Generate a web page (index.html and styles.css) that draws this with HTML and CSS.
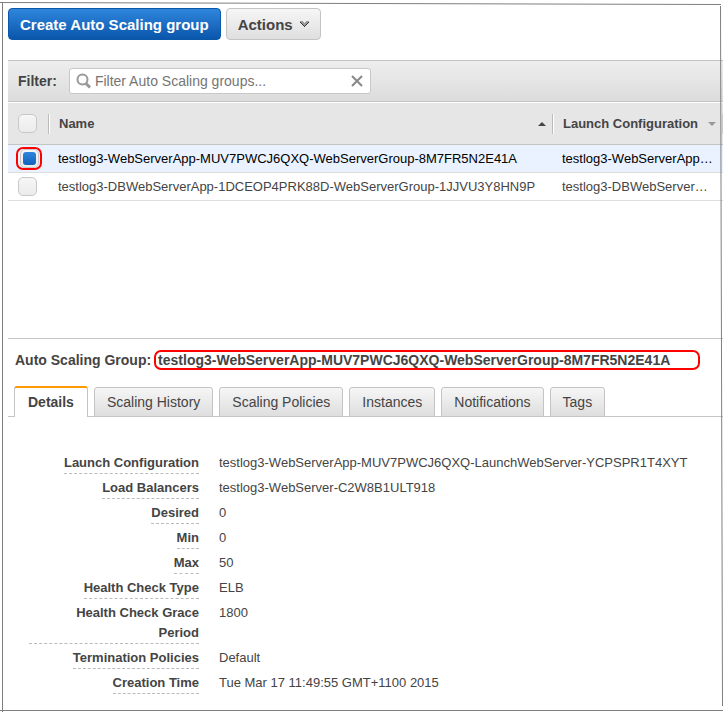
FILE: index.html
```html
<!DOCTYPE html>
<html lang="en">
<head>
    <meta charset="UTF-8">
    <meta name="viewport" content="width=device-width, initial-scale=1.0">
    <title>Auto Scaling Groups</title>
    <link rel="stylesheet" href="styles.css">
</head>
<body>
    <div class="page">
        <div class="toolbar">
            <button type="button" class="btn btn-primary">Create Auto Scaling group</button>
            <button type="button" class="btn">Actions
                <svg width="9" height="7" viewBox="0 0 9 7" shape-rendering="crispEdges"><path d="M0 0h3v1h1v1h1V1h1V0h3v2H8v1H7v1H6v1H5v1H4V5H3V4H2V3H1V2H0z" fill="#999"/><path d="M0 1h1v1h1v1h1v1h1v1h1V4h1V3h1V2h1V1h1v1H8v1H7v1H6v1H5v1H4V5H3V4H2V3H1V2H0z" fill="#333"/></svg>
            </button>
        </div>

        <div class="filter-bar">
            <label for="filter">Filter:</label>
            <div class="search">
                <svg width="16" height="16" viewBox="0 0 16 16" fill="none" stroke="#999"><circle cx="6.500" cy="6.500" r="5" stroke-width="2"/><path d="M10 10.500l4 4" stroke-width="3"/></svg>
                <input type="text" id="filter" placeholder="Filter Auto Scaling groups...">
                <button type="button" class="clear" aria-label="Clear filter">
                    <svg width="12" height="12" viewBox="0 0 12 12" stroke="#888" stroke-width="2"><path d="M1 1l10 10M11 1L1 11"/></svg>
                </button>
            </div>
        </div>

        <div class="list">
            <table class="groups">
                <colgroup>
                    <col class="col-check">
                    <col class="col-name">
                    <col class="col-config">
                </colgroup>
                <thead>
                    <tr>
                        <th><input type="checkbox" class="check" aria-label="Select all"></th>
                        <th><div class="head">Name <span class="sort sort-up"></span></div></th>
                        <th><div class="head head-last">Launch Configuration <span class="sort sort-down"></span></div></th>
                    </tr>
                </thead>
                <tbody>
                    <tr class="selected">
                        <td><span class="mark mark-check"><input type="checkbox" class="check" aria-label="Select testlog3-WebServerApp" checked></span></td>
                        <td>testlog3-WebServerApp-MUV7PWCJ6QXQ-WebServerGroup-8M7FR5N2E41A</td>
                        <td>testlog3-WebServerApp…</td>
                    </tr>
                    <tr>
                        <td><input type="checkbox" class="check" aria-label="Select testlog3-DBWebServerApp"></td>
                        <td>testlog3-DBWebServerApp-1DCEOP4PRK88D-WebServerGroup-1JJVU3Y8HN9P</td>
                        <td>testlog3-DBWebServer…</td>
                    </tr>
                </tbody>
            </table>
        </div>

        <div class="detail">
            <h2 class="title">Auto Scaling Group:<span class="mark mark-name">testlog3-WebServerApp-MUV7PWCJ6QXQ-WebServerGroup-8M7FR5N2E41A</span></h2>
            <div class="tabs">
                <button type="button" class="tab active">Details</button>
                <button type="button" class="tab">Scaling History</button>
                <button type="button" class="tab">Scaling Policies</button>
                <button type="button" class="tab">Instances</button>
                <button type="button" class="tab">Notifications</button>
                <button type="button" class="tab">Tags</button>
            </div>
            <dl class="props">
                <dt><span>Launch Configuration</span></dt>
                <dd>testlog3-WebServerApp-MUV7PWCJ6QXQ-LaunchWebServer-YCPSPR1T4XYT</dd>
                <dt><span>Load Balancers</span></dt>
                <dd>testlog3-WebServer-C2W8B1ULT918</dd>
                <dt><span>Desired</span></dt>
                <dd>0</dd>
                <dt><span>Min</span></dt>
                <dd>0</dd>
                <dt><span>Max</span></dt>
                <dd>50</dd>
                <dt><span>Health Check Type</span></dt>
                <dd>ELB</dd>
                <dt><span class="wide">Health Check Grace<br>Period</span></dt>
                <dd>1800</dd>
                <dt><span>Termination Policies</span></dt>
                <dd>Default</dd>
                <dt><span>Creation Time</span></dt>
                <dd>Tue Mar 17 11:49:55 GMT+1100 2015</dd>
            </dl>
        </div>

        <!-- thin frame around the whole page -->
        <svg class="frame" viewBox="0 0 727 712" preserveAspectRatio="none" fill="none" stroke="#7f7f7f" stroke-width="1">
            <path d="M0 2.500L721 4.500M2.500 2v710M720.500 6L722.500 706M0 710.500h723"/>
        </svg>
    </div>
</body>
</html>
```
FILE: styles.css
```css
* {
    box-sizing: border-box;
}

body {
    margin: 0;
    background: #fff;
    color: #444;
    font-family: "Liberation Sans", Arial, sans-serif;
    font-size: 13px;
}

button, input {
    font-family: inherit;
    margin: 0;
}

.page {
    position: relative;
    min-height: 100vh;
    padding: 8px 4px 16px 8px;
}

.frame {
    position: absolute;
    top: 0;
    left: 0;
    width: 100%;
    height: 100%;
    pointer-events: none;
}

.toolbar {
    display: flex;
    gap: 5px;
    margin-bottom: 20px;
}

.btn {
    display: flex;
    align-items: center;
    gap: 7px;
    height: 32px;
    padding: 0 11px;
    border: 1px solid #c4c4c4;
    border-radius: 4px;
    background: linear-gradient(#f6f6f6, #dfdfdf);
    color: #444;
    font-size: 15px;
    font-weight: bold;
    cursor: pointer;
}

.btn-primary {
    border-color: #0b57a8;
    background: linear-gradient(#2f86dd, #0a56ab);
    color: #fff;
}

.filter-bar {
    display: flex;
    align-items: center;
    gap: 12px;
    height: 42px;
    padding-left: 10px;
    border-top: 1px solid #c4c4c4;
    border-bottom: 1px solid #c4c4c4;
    background: linear-gradient(#eee, #dcdcdc);
    margin-bottom: 1px;
}

.filter-bar label {
    font-size: 14px;
    font-weight: bold;
}

.search {
    display: flex;
    align-items: center;
    gap: 3px;
    width: 302px;
    height: 26px;
    padding: 0 7px 0 6px;
    border: 1px solid #c8c8c8;
    border-radius: 3px;
    background: #fff;
}

.search input {
    flex: 1;
    min-width: 0;
    padding: 0;
    border: 0;
    outline: 0;
    font-size: 14px;
}

.search input::placeholder {
    color: #757575;
}

.clear {
    display: flex;
    padding: 0;
    border: 0;
    background: none;
}

.list {
    min-height: 235px;
}

.groups {
    width: 100%;
    border-collapse: separate;
    border-spacing: 0;
    table-layout: fixed;
}

.col-check {
    width: 40px;
}

.col-config {
    width: 171px;
}

.groups th {
    height: 42px;
    padding: 0;
    border-bottom: 1px solid #c4c4c4;
    background: #e6e6e6;
    text-align: left;
}

.head {
    display: flex;
    align-items: center;
    justify-content: space-between;
    height: 20px;
    padding: 0 6px 0 10px;
    border-left: 1px solid #bbb;
    box-shadow: inset 1px 0 #fff;
    white-space: nowrap;
}

.head-last {
    border-right: 1px solid #ccc;
}

.sort {
    border: 4px solid transparent;
}

.sort-up {
    border-top-width: 0;
    border-bottom-color: #444;
}

.sort-down {
    border-bottom-width: 0;
    border-top-color: #999;
}

.groups td {
    height: 28px;
    padding: 0 0 0 10px;
    border-bottom: 1px solid #ddd;
    white-space: nowrap;
}

.groups th:first-child {
    padding-left: 10px;
}

.groups .selected td {
    background: #eaf2ff;
    color: #000;
}

.check {
    appearance: none;
    display: grid;
    place-items: center;
    width: 19px;
    height: 19px;
    border: 1px solid #c8c8c8;
    border-radius: 5px;
    background: linear-gradient(#f6f6f6, #ebebeb);
}

.check:checked::before {
    content: "";
    width: 13px;
    height: 13px;
    border-radius: 3px;
    background: linear-gradient(#2e86dc, #1262ba);
}

/* red call-outs */
.mark {
    border: 2px solid #f00;
    border-radius: 7px;
}

.mark-check {
    display: flex;
    justify-content: center;
    width: 26px;
    height: 23px;
    margin-left: -2px;
}

.detail {
    border-top: 1px solid #c4c4c4;
}

.title {
    display: flex;
    align-items: center;
    gap: 3px;
    height: 20px;
    margin: 11px 0 16px;
    padding-left: 7px;
    font-size: 14px;
    white-space: nowrap;
}

.mark-name {
    padding: 0 28px 0 2px;
    line-height: 16px;
}

.tabs {
    display: flex;
    align-items: flex-end;
    gap: 6px;
    height: 31px;
    padding-left: 6px;
    box-shadow: inset 0 -1px #c4c4c4;
}

.tab {
    height: 30px;
    padding: 0 12px;
    border: 1px solid #c4c4c4;
    border-radius: 3px 3px 0 0;
    background: linear-gradient(#f6f6f6, #dedede);
    color: #444;
    font-size: 14px;
    cursor: pointer;
}

.tab.active {
    height: 31px;
    padding: 0 13px 1px;
    border-top: 2px solid #f90;
    border-bottom: 0;
    background: #fff;
    font-weight: bold;
}

.props {
    display: grid;
    grid-template-columns: 170px 1fr;
    column-gap: 20px;
    row-gap: 4px;
    margin: 36px 0 0;
    padding-left: 21px;
    line-height: 20px;
}

.props dt {
    display: flex;
    justify-content: flex-end;
    font-weight: bold;
    text-align: right;
}

.props dt span {
    border-bottom: 1px dashed #bbb;
}

.props dt .wide {
    flex: 1;
}

.props dd {
    margin: 0;
}
```
